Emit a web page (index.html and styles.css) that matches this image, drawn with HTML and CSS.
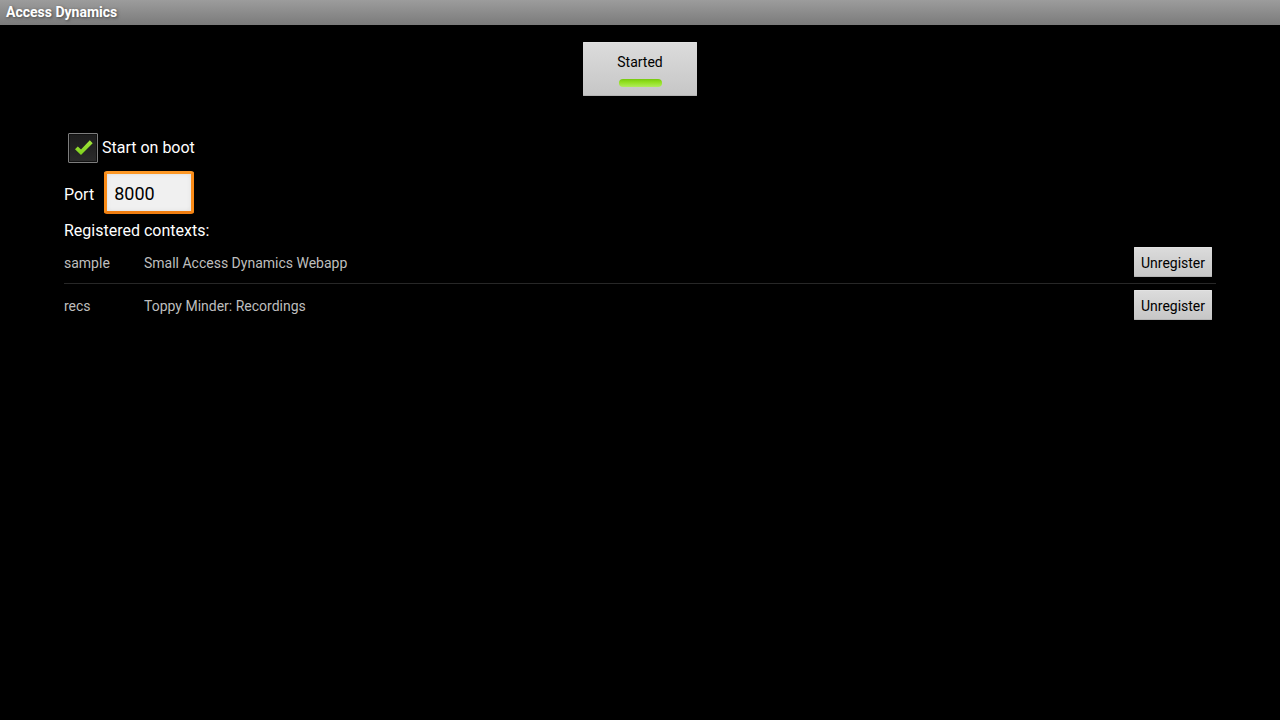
FILE: index.html
```html
<!DOCTYPE html>
<html lang="en">
<head>
    <meta charset="UTF-8">
    <meta name="viewport" content="width=device-width, initial-scale=1.0">
    <title>Access Dynamics</title>
    <link rel="stylesheet" href="styles.css">
</head>
<body>
    <header class="title-bar">Access Dynamics</header>

    <main class="content">
        <button type="button" class="toggle" aria-pressed="true">
            Started
            <span class="toggle-light"></span>
        </button>

        <form class="settings">
            <div class="boot-row">
                <span class="check">
                    <input type="checkbox" id="startOnBoot" class="check-box" checked>
                    <svg class="check-mark" viewBox="0 0 30 30" aria-hidden="true">
                        <defs>
                            <linearGradient id="tick" x1="0" y1="0" x2="0" y2="1">
                                <stop offset="0" stop-color="#a4e63c"/>
                                <stop offset="1" stop-color="#7ccf1c"/>
                            </linearGradient>
                        </defs>
                        <path d="M7 16.2 L9.8 13.4 L13 16.5 L21.8 7.3 L24.7 10.2 L13 22 Z" fill="url(#tick)"/>
                    </svg>
                </span>
                <label for="startOnBoot">Start on boot</label>
            </div>
            <div class="port-row">
                <label for="port">Port</label>
                <input type="text" id="port" class="port" value="8000">
            </div>
        </form>

        <h2 class="list-title">Registered contexts:</h2>
        <table class="contexts">
            <tr>
                <td class="name">sample</td>
                <td>Small Access Dynamics Webapp</td>
                <td class="action"><button type="button" class="unregister">Unregister</button></td>
            </tr>
            <tr>
                <td class="name">recs</td>
                <td>Toppy Minder: Recordings</td>
                <td class="action"><button type="button" class="unregister">Unregister</button></td>
            </tr>
        </table>
    </main>
</body>
</html>
```

FILE: styles.css
```css
* {
    box-sizing: border-box;
}
body {
    margin: 0;
    background: #000;
    color: #fff;
    font-family: Roboto, sans-serif;
    font-size: 16px;
    line-height: 20px;
}
button, input {
    font-family: inherit;
    margin: 0;
}
.title-bar {
    height: 25px;
    padding: 0 6px;
    background: linear-gradient(#9c9c9c, #7b7b7b);
    font-size: 14px;
    font-weight: bold;
    line-height: 25px;
    text-shadow: 1px 1px 3px #444;
}
.content {
    display: flex;
    flex-direction: column;
    padding: 17px 5%;
}
.toggle, .unregister {
    border: none;
    border-radius: 1px;
    background: linear-gradient(#dcdcdc, #c6c6c6);
    box-shadow: inset 0 1px #e2e2e2, inset 0 -1px #b4b4b4;
    color: #000;
    font-size: 14px;
}
.toggle {
    display: flex;
    flex-direction: column;
    align-items: center;
    align-self: center;
    gap: 8px;
    width: 114px;
    height: 54px;
    padding: 11px 0 0;
    line-height: 18px;
}
.toggle-light {
    width: 43px;
    height: 8px;
    border-radius: 4px;
    background: linear-gradient(#77c80f, #92e01f 40%, #b0ec5c);
}
.settings {
    margin-top: 37px;
}
.boot-row {
    display: flex;
    align-items: center;
    gap: 4px;
    padding-left: 4px;
}
.check {
    position: relative;
    display: flex;
}
.check-box {
    appearance: none;
    width: 30px;
    height: 30px;
    border: 1px solid #7d7d7d;
    border-radius: 1px;
    background: linear-gradient(#1c1c1c, #2b2b2b);
    box-shadow: inset 0 0 0 1px #111;
}
.check-mark {
    position: absolute;
    inset: 0;
    display: none;
    pointer-events: none;
}
.check-box:checked + .check-mark {
    display: block;
}
.port-row {
    display: flex;
    align-items: baseline;
    gap: 10px;
    margin-top: 8px;
}
.port {
    width: 90px;
    height: 43px;
    padding: 2px 7px 0;
    border: 3px solid #f98b17;
    border-color: #fd9826 #f98b17 #ef7d10;
    border-radius: 3px;
    outline: none;
    background: #f0f0f0;
    box-shadow: inset 0 0 4px #ddd;
    color: #000;
    font-size: 18px;
}
.list-title {
    margin: 6px 0 0;
    padding-top: 1px;
    font-size: 16px;
    font-weight: normal;
}
.contexts {
    width: 100%;
    border-spacing: 0;
    color: #bebebe;
    font-size: 14px;
}
.contexts td {
    height: 42px;
    padding: 2px 0 0;
}
.contexts tr + tr td {
    height: 43px;
    border-top: 1px solid #272727;
}
.contexts .name {
    width: 80px;
}
.contexts .action {
    width: 82px;
    padding: 0 4px 0 0;
}
.unregister {
    display: block;
    width: 78px;
    height: 30px;
    padding: 2px 0 0;
}
```
